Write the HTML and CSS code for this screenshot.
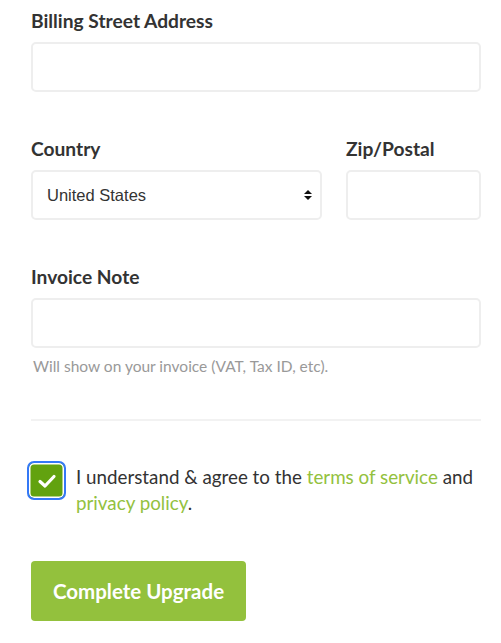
FILE: index.html
```html
<!DOCTYPE html>
<html>
<head>
<meta charset="utf-8">
<link rel="stylesheet" href="styles.css">
</head>
<body>
<form class="form">
  <div class="field">
    <label class="label">Billing Street Address</label>
    <div class="input"></div>
  </div>
  <div class="row">
    <div class="field grow">
      <label class="label">Country</label>
      <div class="input select">
        <span>United States</span>
        <svg class="arrows" width="8" height="12" viewBox="0 0 8 12"><path d="M4 1 L8 5 L0 5 Z M0 7 L8 7 L4 11 Z" fill="#111"/></svg>
      </div>
    </div>
    <div class="field zip">
      <label class="label">Zip/Postal</label>
      <div class="input"></div>
    </div>
  </div>
  <div class="field note">
    <label class="label">Invoice Note</label>
    <div class="input"></div>
    <p class="help">Will show on your invoice (VAT, Tax ID, etc).</p>
  </div>
  <hr class="divider">
  <div class="agree">
    <span class="check">
      <svg width="20" height="16" viewBox="0 0 20 16"><path d="M3 8.5 L8 13 L17 3.5" fill="none" stroke="#fff" stroke-width="3.2" stroke-linecap="round" stroke-linejoin="round"/></svg>
    </span>
    <p class="agree-text">I understand &amp; agree to the <a class="link">terms of service</a> and <a class="link">privacy policy</a>.</p>
  </div>
  <button type="button" class="btn">Complete Upgrade</button>
</form>
</body>
</html>
```
FILE: styles.css
```css
* { box-sizing: border-box; }
body {
  margin: 0;
  background: #fff;
  font-family: Lato, "Open Sans", sans-serif;
  color: #333;
}
.form {
  width: 450px;
  margin-left: 31px;
  padding-top: 10px;
  display: flex;
  flex-direction: column;
}
.field {
  display: flex;
  flex-direction: column;
  margin-bottom: 46px;
}
.label {
  font-weight: 700;
  font-size: 19.2px;
  line-height: 22px;
  color: #333;
  margin-bottom: 10px;
}
.input {
  height: 50px;
  border: 2px solid #eee;
  border-radius: 5px;
  background: #fff;
}
.row {
  display: flex;
  gap: 24px;
}
.grow { flex: 1; }
.zip { width: 135px; }
.select {
  display: flex;
  align-items: center;
  justify-content: space-between;
  padding: 0 8px 0 14px;
  font-family: "Liberation Sans", Arial, sans-serif;
  font-size: 16.5px;
  color: #333;
}
.arrows { display: block; }
.help {
  margin: 8px 0 0 2px;
  font-size: 15.5px;
  line-height: 20px;
  color: #999;
}
.note { margin-bottom: 43px; }
.divider {
  border: 0;
  border-top: 2px solid #f2f2f2;
  margin: 0 0 40px;
  width: 450px;
}
.agree {
  display: flex;
  align-items: flex-start;
  gap: 10px;
  margin-left: -4px;
}
.check {
  flex: none;
  width: 39px;
  height: 39px;
  border: 2px solid #3478f6;
  border-radius: 7px;
  display: flex;
  background: #62a20f;
  box-shadow: inset 0 0 0 1.5px #fff;
}
.check svg {
  margin: auto;
}
.agree-text {
  margin: 3px 0 0;
  font-size: 18.8px;
  line-height: 26px;
  color: #333;
}
.link {
  color: #93c13e;
  text-decoration: none;
}
.btn {
  align-self: flex-start;
  margin-top: 45px;
  width: 215px;
  height: 60px;
  border: 0;
  border-radius: 4px;
  background: #93c13d;
  color: #fff;
  font-family: Lato, sans-serif;
  font-weight: 700;
  font-size: 20.5px;
}
```
